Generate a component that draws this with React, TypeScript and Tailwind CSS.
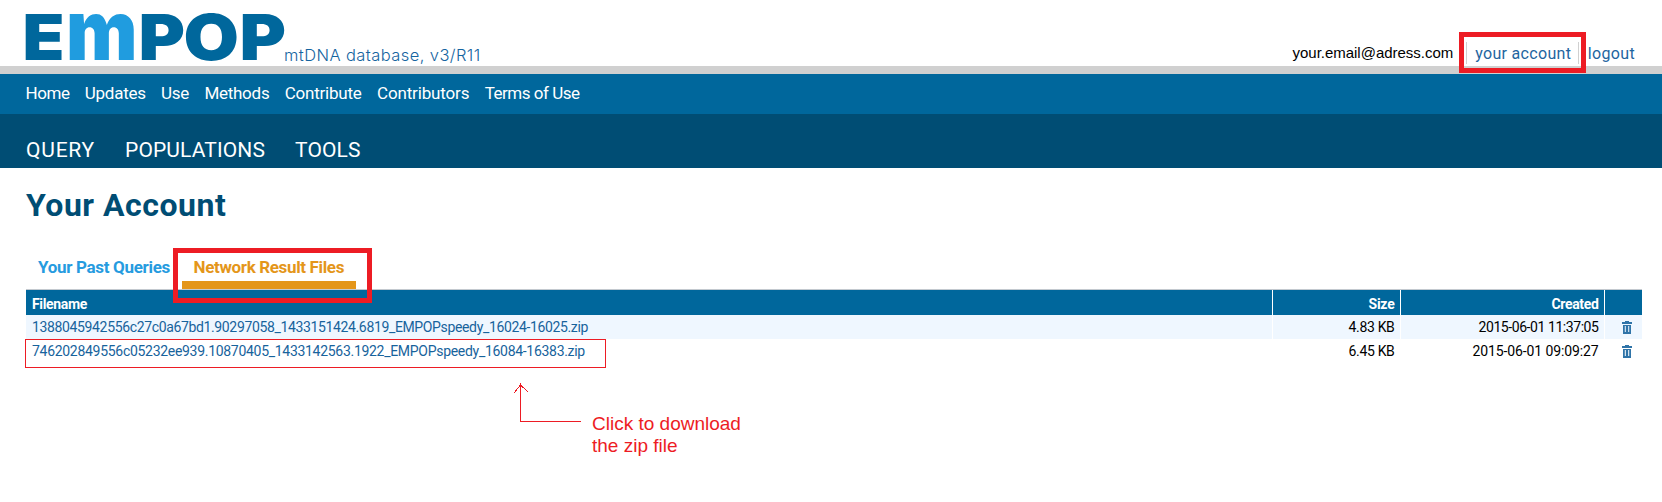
const nav = [
  { label: "Home", tracking: "tracking-[-0.438px]" },
  { label: "Updates", tracking: "tracking-[-0.252px]" },
  { label: "Use", tracking: "tracking-[-0.271px]" },
  { label: "Methods", tracking: "tracking-[-0.263px]" },
  { label: "Contribute", tracking: "tracking-[-0.211px]" },
  { label: "Contributors", tracking: "tracking-[-0.15px]" },
  { label: "Terms of Use", tracking: "tracking-[-0.47px]" },
];

const sections = [
  { label: "QUERY", tracking: "tracking-[0.787px]" },
  { label: "POPULATIONS", tracking: "tracking-[0.13px]" },
  { label: "TOOLS", tracking: "tracking-[0.15px]" },
];

const files = [
  {
    name: "1388045942556c27c0a67bd1.90297058_1433151424.6819_EMPOPspeedy_16024-16025.zip",
    size: "4.83 KB",
    created: "2015-06-01 11:37:05",
    row: "bg-[#eff7ff]",
    nameTracking: "tracking-[-0.355px]",
    dateTracking: "tracking-[-0.429px]",
  },
  {
    name: "746202849556c05232ee939.10870405_1433142563.1922_EMPOPspeedy_16084-16383.zip",
    size: "6.45 KB",
    created: "2015-06-01 09:09:27",
    row: "bg-white",
    nameTracking: "tracking-[-0.295px]",
    dateTracking: "tracking-[-0.113px]",
  },
];

function Logo() {
  return (
    <svg
      width="260"
      height="52"
      viewBox="26 10 260 52"
      className="block shrink-0 overflow-visible font-[Inter,sans-serif] font-black"
      fill="#00679c"
      aria-label="EMPOP"
    >
      <text x="22.6" y="60" fontSize="63" textLength="42" lengthAdjust="spacingAndGlyphs">E</text>
      <text x="66" y="60" fontSize="84" textLength="71.5" lengthAdjust="spacingAndGlyphs" fill="#209cdf">m</text>
      <text x="138.5" y="60" fontSize="63" textLength="46.5" lengthAdjust="spacingAndGlyphs">P</text>
      <text x="183.6" y="60" fontSize="63" textLength="55.5" lengthAdjust="spacingAndGlyphs">O</text>
      <text x="239.5" y="60" fontSize="63" textLength="46.5" lengthAdjust="spacingAndGlyphs">P</text>
    </svg>
  );
}

function Trash() {
  return (
    <svg width="10" height="13" viewBox="0 0 10 13" className="block" fill="#2f74a8">
      <path d="M3 0h4v1h3v2H0V1h3z" />
      <path fillRule="evenodd" d="M1 4h8v9H1zM2.8 5v6h1V5zM6.2 5v6h1V5z" />
    </svg>
  );
}

const columns = "grid grid-cols-[1246px_127px_203px_37px] gap-x-px";

export default function App() {
  return (
    <div className="relative h-[502px] w-[1662px] overflow-hidden bg-white font-[Roboto,sans-serif] text-black">
      <header className="flex h-[74px] justify-between border-b-8 border-[#d0d0d0] pl-[26px] pr-[27px]">
        <div className="flex items-start pt-[10px]">
          <Logo />
          <span className="-ml-[2px] pt-[33px] font-[Inter,sans-serif] text-[16.5px] leading-6 font-light tracking-[0.42px] text-[#1464a0]">
            mtDNA database, v3/R11
          </span>
        </div>
        <div className="flex items-end text-[16px] leading-[22px] text-[#1e659f]">
          <span className="pr-[13px] pb-[2px] font-['Liberation_Sans',sans-serif] text-[15px] tracking-[-0.02px] text-black">
            your.email@adress.com
          </span>
          <a className="mb-[2px] h-[22px] w-[113px] border-x border-[#d0d0d0] pt-px pl-[8px] tracking-[0.311px]">your account</a>
          <a className="mb-[2px] h-[22px] pt-px pl-[8.5px] tracking-[0.35px]">logout</a>
        </div>
      </header>

      <nav className="flex h-10 items-center gap-[15.3px] bg-[#00679c] pl-[25.5px] text-[17px] text-white">
        {nav.map((n) => (
          <a key={n.label} className={n.tracking}>{n.label}</a>
        ))}
      </nav>
      <nav className="flex h-[54px] items-center gap-[30px] bg-[#004d74] pt-[19px] pl-[26px] text-[21px] text-white">
        {sections.map((n) => (
          <a key={n.label} className={n.tracking}>{n.label}</a>
        ))}
      </nav>

      <main className="pr-5 pl-[26px]">
        <h1 className="text-[32px] leading-[74px] font-bold tracking-[0.52px] text-[#004d74]">Your Account</h1>
        <div className="flex h-12 border-b border-[#c3c9cf] pt-[11px] text-[17px] leading-7 font-bold">
          <a className="w-[156px] pl-3 tracking-[-0.312px] whitespace-nowrap text-[#269bdf]">Your Past Queries</a>
          <a className="h-9 w-[174px] border-b-8 border-[#e4961a] pl-[11.5px] tracking-[-0.35px] whitespace-nowrap text-[#e4961a]">
            Network Result Files
          </a>
        </div>
        <div className="text-[14px] leading-6">
          <div className={`${columns} h-[25px] font-bold leading-[22px] text-white`}>
            <div className="bg-[#00679c] pt-[3px] pl-[6px] tracking-[-0.336px]">Filename</div>
            <div className="bg-[#00679c] pt-[3px] pr-[5.5px] text-right tracking-[-0.227px]">Size</div>
            <div className="bg-[#00679c] pt-[3px] pr-[5.5px] text-right tracking-[-0.342px]">Created</div>
            <div className="bg-[#00679c]" />
          </div>
          {files.map((f) => (
            <div key={f.name} className={`${columns} h-6`}>
              <a className={`${f.row} ${f.nameTracking} pl-[6px] whitespace-nowrap text-[#17639c]`}>{f.name}</a>
              <span className={`${f.row} pr-[5.5px] text-right tracking-[-0.326px]`}>{f.size}</span>
              <span className={`${f.row} ${f.dateTracking} pr-[5.5px] text-right`}>{f.created}</span>
              <span className={`${f.row} flex justify-center pt-[6px] pl-[7px]`}>
                <Trash />
              </span>
            </div>
          ))}
        </div>
      </main>

      <div className="absolute top-8 left-[1459px] h-[41px] w-[127px] border-5 border-[#ed1c24]" />
      <div className="absolute top-[248px] left-[173px] h-[55px] w-[199px] border-5 border-[#ed1c24]" />
      <div className="absolute top-[339px] left-[25px] h-[29px] w-[581px] border border-[#ed1c24]" />
      <svg
        className="absolute top-[383px] left-[512px]"
        width="72"
        height="42"
        viewBox="0 0 72 42"
        fill="none"
        stroke="#ed1c24"
        shapeRendering="crispEdges"
      >
        <path d="M8.5 0v38.5H69M2 10l6.5-8L16 9" />
      </svg>
      <p className="absolute top-[413px] left-[592px] font-['Liberation_Sans',sans-serif] text-[19px] leading-[22px] text-[#ed1c24]">
        Click to download
        <br />
        the zip file
      </p>
    </div>
  );
}
